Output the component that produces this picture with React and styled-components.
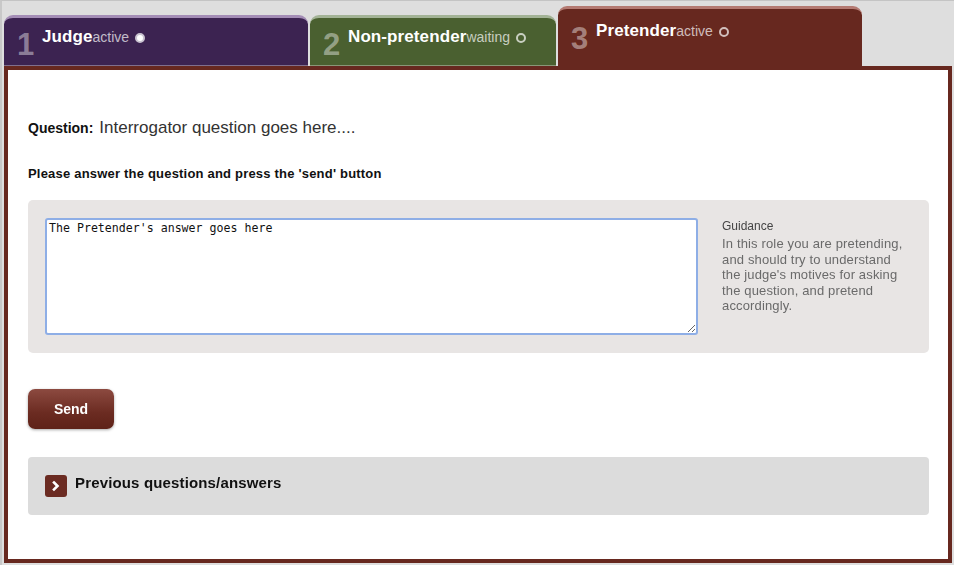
import React, { useState } from "react";
import styled, { createGlobalStyle } from "styled-components";

const GlobalStyle = createGlobalStyle`
	html, body {
		margin: 0;
		padding: 0;
		background: #fff;
	}
	body {
		font-family: "Liberation Sans", Arial, sans-serif;
	}
`;

const tabs = [
	{ num: 1, name: "Judge", status: "active", dot: "filled", bg: "#3c2351", edge: "#a48db6" },
	{ num: 2, name: "Non-pretender", status: "waiting", dot: "hollow", bg: "#4a6030", edge: "#a3b396" },
	{ num: 3, name: "Pretender", status: "active", dot: "hollow", bg: "#67281f", edge: "#b47a72", current: true },
];

const App = () => {
	const [answer, setAnswer] = useState("The Pretender's answer goes here");
	return (
		<>
			<GlobalStyle />
			<Page>
				<TabBar>
					{tabs.map((t) => (
						<Tab key={t.num} $bg={t.bg} $edge={t.edge} $current={t.current} $w={t.num === 2 ? 246 : 304}>
							<TabNum>{t.num}</TabNum>
							<TabLabel>
								<TabName>{t.name}</TabName>
								<TabStatus>{t.status}</TabStatus>
								<Dot $filled={t.dot === "filled"} />
							</TabLabel>
						</Tab>
					))}
				</TabBar>
				<Panel>
					<QuestionRow>
						<QLabel>Question:</QLabel>
						<QText>Interrogator question goes here....</QText>
					</QuestionRow>
					<Instruction>Please answer the question and press the 'send' button</Instruction>
					<AnswerBox>
						<Answer value={answer} onChange={(e) => setAnswer(e.target.value)} autoFocus />
						<Guidance>
							<GuidanceTitle>Guidance</GuidanceTitle>
							<GuidanceText>
								In this role you are pretending, and should try to understand the judge's motives for
								asking the question, and pretend accordingly.
							</GuidanceText>
						</Guidance>
					</AnswerBox>
					<SendButton type="button">Send</SendButton>
					<History>
						<Chevron>
							<svg width="10" height="12" viewBox="0 0 10 12">
								<path d="M3 2.5 L6.5 6 L3 9.5" fill="none" stroke="#fff" strokeWidth="2.6" strokeLinecap="square" />
							</svg>
						</Chevron>
						<HistoryTitle>Previous questions/answers</HistoryTitle>
					</History>
				</Panel>
			</Page>
		</>
	);
};

const Page = styled.div`
	width: 954px;
	height: 565px;
	box-sizing: border-box;
	border-top: 1px solid #c4c4c4;
	border-left: 2px solid #c8c8c8;
	background: #dedede;
	padding: 5px 2px 2px 2px;
	display: flex;
	flex-direction: column;
`;

const TabBar = styled.div`
	display: flex;
	align-items: flex-end;
	gap: 2px;
	height: 62px;
	margin-bottom: -2px;
	position: relative;
	z-index: 1;
`;

const Tab = styled.div`
	box-sizing: border-box;
	width: ${(p) => p.$w}px;
	height: ${(p) => (p.$current ? 62 : 51)}px;
	margin-bottom: ${(p) => (p.$current ? 0 : 2)}px;
	background: ${(p) => p.$bg};
	border-top: 3px solid ${(p) => p.$edge};
	border-radius: 9px 9px 0 0;
	padding: ${(p) => (p.$current ? "13px" : "10px")} 0 0 13px;
	display: flex;
	align-items: flex-start;
	color: #fff;
	${(p) => !p.$current && "box-shadow: inset 0 -1px 0 rgba(255,255,255,0.35);"}
`;

const TabNum = styled.span`
	font-size: 31px;
	font-weight: bold;
	line-height: 31px;
	margin-top: 1px;
	width: 25px;
	color: rgba(255, 255, 255, 0.42);
`;

const TabLabel = styled.span`
	display: flex;
	align-items: baseline;
	line-height: 18px;
`;

const TabName = styled.span`
	font-size: 17px;
	font-weight: bold;
	letter-spacing: 0.1px;
`;

const TabStatus = styled.span`
	font-size: 14px;
	color: rgba(255, 255, 255, 0.7);
	margin-right: 6px;
`;

const Dot = styled.span`
	display: inline-block;
	box-sizing: border-box;
	width: 10px;
	height: 10px;
	border-radius: 50%;
	align-self: center;
	margin-top: 2px;
	border: 2px solid ${(p) => (p.$filled ? "#c9c3d0" : "rgba(255,255,255,0.7)")};
	background: ${(p) => (p.$filled ? "#fff" : "transparent")};
`;

const Panel = styled.div`
	flex: 1;
	box-sizing: border-box;
	background: #fff;
	border: 4px solid #67281f;
	padding: 48px 19px 0 20px;
	display: flex;
	flex-direction: column;
	align-items: flex-start;
`;

const QuestionRow = styled.div`
	display: flex;
	align-items: baseline;
	gap: 6px;
	color: #222;
`;

const QLabel = styled.span`
	font-size: 14px;
	font-weight: bold;
	color: #111;
`;

const QText = styled.span`
	font-size: 17px;
	color: #333;
`;

const Instruction = styled.p`
	margin: 28px 0 0;
	font-size: 13px;
	font-weight: bold;
	letter-spacing: 0.2px;
	color: #111;
`;

const AnswerBox = styled.div`
	margin-top: 19px;
	align-self: stretch;
	background: #e8e5e4;
	border-radius: 5px;
	padding: 18px 18px 18px 17px;
	display: flex;
	gap: 24px;
`;

const Answer = styled.textarea`
	box-sizing: border-box;
	width: 653px;
	height: 117px;
	flex: none;
	border: 2px solid #8eaee6;
	border-radius: 3px;
	padding: 1px 2px;
	font-family: "DejaVu Sans Mono", "Liberation Mono", monospace;
	font-size: 11.6px;
	color: #111;
	resize: vertical;
	outline: none;
	background: #fff;
`;

const Guidance = styled.div`
	padding-top: 1px;
	color: #666;
`;

const GuidanceTitle = styled.div`
	font-size: 12px;
	color: #444;
	margin-bottom: 3px;
`;

const GuidanceText = styled.p`
	margin: 0;
	width: 190px;
	font-size: 13px;
	letter-spacing: 0.15px;
	line-height: 15.5px;
	color: #6a6a6a;
`;

const SendButton = styled.button`
	margin-top: 36px;
	width: 86px;
	height: 40px;
	border: none;
	border-radius: 7px;
	background: linear-gradient(#8c4a40, #6b2b21 60%, #5e2218);
	box-shadow: 0 1px 3px rgba(0, 0, 0, 0.35);
	color: #fff;
	font-family: "Liberation Sans", Arial, sans-serif;
	font-size: 14px;
	font-weight: bold;
	cursor: pointer;
`;

const History = styled.div`
	margin-top: 28px;
	align-self: stretch;
	height: 58px;
	box-sizing: border-box;
	background: #dcdcdc;
	border-radius: 4px;
	padding: 17px 17px 0;
	display: flex;
	align-items: flex-start;
	gap: 8px;
`;

const Chevron = styled.span`
	width: 22px;
	height: 22px;
	border-radius: 3px;
	background: #6b2b22;
	display: flex;
	align-items: center;
	justify-content: center;
	margin-top: 1px;
`;

const HistoryTitle = styled.span`
	font-size: 15px;
	line-height: 17px;
	font-weight: bold;
	letter-spacing: 0.15px;
	color: #111;
`;

export default App;
